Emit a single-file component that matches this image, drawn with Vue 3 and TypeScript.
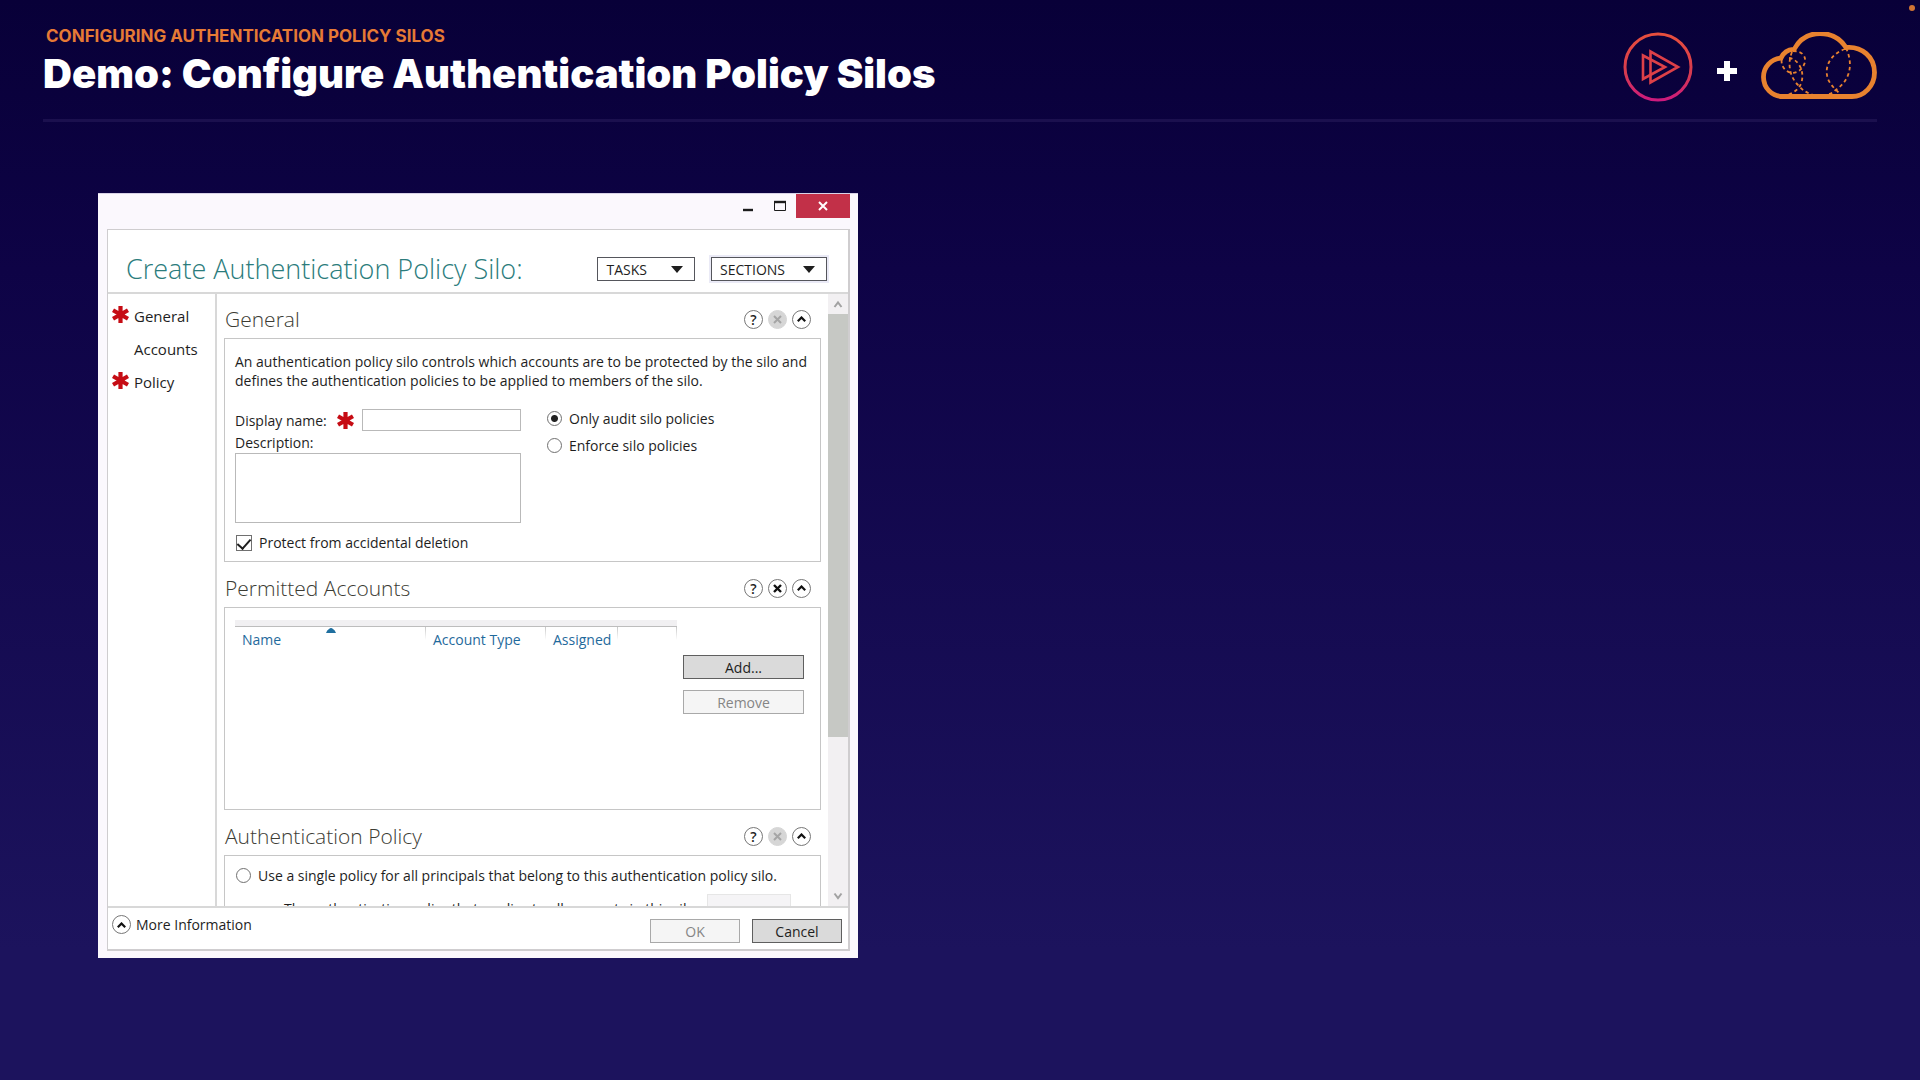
<script setup lang="ts">
import { ref } from 'vue'

interface NavItem {
  label: string
  required: boolean
}

const navItems: NavItem[] = [
  { label: 'General', required: true },
  { label: 'Accounts', required: false },
  { label: 'Policy', required: true },
]

const columns = ['Name', 'Account Type', 'Assigned', '']

const displayName = ref('')
const description = ref('')
const protect = ref(true)
const mode = ref('audit')
const policyScope = ref('')
</script>

<template>
  <div class="page">
    <header class="banner">
      <div class="heading">
        <p class="eyebrow">CONFIGURING AUTHENTICATION POLICY SILOS</p>
        <h1>Demo: Configure Authentication Policy Silos</h1>
      </div>
      <div class="logos">
        <svg width="70" height="70" viewBox="0 0 70 70" fill="none" aria-hidden="true">
          <defs>
            <linearGradient id="ring" x1="0" y1="0" x2="0" y2="70" gradientUnits="userSpaceOnUse">
              <stop offset="0" stop-color="#e8503c" />
              <stop offset="0.6" stop-color="#d63a50" />
              <stop offset="1" stop-color="#cc1880" />
            </linearGradient>
          </defs>
          <circle cx="35" cy="35" r="33" stroke="url(#ring)" stroke-width="3" />
          <path d="M20 23.500V47L42 35Z" stroke="#dd4048" stroke-width="2.600" />
          <path d="M27.500 19.500V50.500L55 35Z" stroke="#dd4048" stroke-width="2.600" />
        </svg>
        <svg class="plus" width="20" height="20" viewBox="0 0 20 20" aria-hidden="true">
          <path d="M7 0h6v7h7v6h-7v7h-6v-7H0V7h7z" fill="#fff" />
        </svg>
        <svg width="116" height="70" viewBox="0 1 116 70" fill="none" stroke="#e8822f" aria-hidden="true">
          <path
            d="M22 65.500H91C103 65.500 113.500 55 113.500 41.500C113.500 26 101 15 85 16.500C79 7 70 2.500 59 2.500C47 2.500 38 9 33 18.500C27 18 22 22 20 27C10 28 2.500 36 2.500 46C2.500 57 11 65.500 22 65.500Z"
            stroke-width="4.800"
          />
          <g stroke-width="1.800" stroke-dasharray="3.500 3">
            <path d="M32 20C41 20 45 25 44 31C42 38 37 42 31 42C24 41 19 34 21 27" />
            <path d="M28 27C37 28 43 39 41 49C40 56 34 62 26 64" />
            <path d="M31 21C26 33 29 46 37 54C41 59 46 62 52 64" />
            <path d="M84 18C72 22 64 33 66 44C67 52 74 58 80 64" />
            <path d="M85 17C92 32 90 48 76 58C73 60 71 63 65 64" />
          </g>
        </svg>
      </div>
      <span class="corner-dot"></span>
    </header>

    <main class="stage">
      <section class="dialog" aria-label="Create Authentication Policy Silo">
        <div class="titlebar">
          <button class="win-btn" type="button" aria-label="Minimize">
            <svg width="12" height="12" viewBox="0 0 12 12"><path d="M1 10h10" stroke="#1c1c1c" stroke-width="2.400" /></svg>
          </button>
          <button class="win-btn" type="button" aria-label="Maximize">
            <svg width="12" height="12" viewBox="0 0 12 12" fill="none">
              <path d="M.5 1v9.500h11V1" stroke="#1c1c1c" />
              <path d="M0 2h12" stroke="#1c1c1c" stroke-width="2.400" />
            </svg>
          </button>
          <button class="win-btn close" type="button" aria-label="Close">
            <svg width="10" height="10" viewBox="0 0 10 10"><path d="M1 1l8 8M9 1l-8 8" stroke="#fff" stroke-width="2" /></svg>
          </button>
        </div>

        <div class="frame">
          <div class="frame-head">
            <h2>Create Authentication Policy Silo:</h2>
            <div class="menus">
              <button class="menu" type="button">TASKS<span class="caret"></span></button>
              <button class="menu focused" type="button">SECTIONS<span class="caret"></span></button>
            </div>
          </div>

          <div class="frame-body">
            <nav class="side">
              <a v-for="item in navItems" :key="item.label" href="#" class="side-link">
                <span class="side-mark">
                  <svg v-if="item.required" width="17" height="17" viewBox="0 0 17 17" aria-label="Required">
                    <path d="M8.500 0v17M1 4.200l15 8.600M16 4.200l-15 8.600" stroke="#c60c14" stroke-width="4.200" />
                  </svg>
                </span>
                {{ item.label }}
              </a>
            </nav>

            <div class="content">
              <section class="group">
                <div class="group-head">
                  <h3>General</h3>
                  <div class="tools">
                    <button class="round" type="button" aria-label="Help">?</button>
                    <button class="round off" type="button" aria-label="Remove section" disabled>
                      <svg width="9" height="9" viewBox="0 0 9 9"><path d="M1 1l7 7M8 1l-7 7" stroke="#a5a5a5" stroke-width="2" /></svg>
                    </button>
                    <button class="round" type="button" aria-label="Collapse">
                      <svg width="9" height="6" viewBox="0 0 9 6" fill="none"><path d="M.8 5.200l3.700-3.700 3.700 3.700" stroke="#111" stroke-width="2.200" /></svg>
                    </button>
                  </div>
                </div>
                <div class="box general">
                  <p class="intro">
                    An authentication policy silo controls which accounts are to be protected by the silo and<br />
                    defines the authentication policies to be applied to members of the silo.
                  </p>
                  <div class="form">
                    <div class="fields">
                      <div class="name-row">
                        <label for="display-name">Display name:</label>
                        <svg width="17" height="17" viewBox="0 0 17 17" aria-label="Required">
                          <path d="M8.500 0v17M1 4.200l15 8.600M16 4.200l-15 8.600" stroke="#c60c14" stroke-width="4.200" />
                        </svg>
                        <input id="display-name" v-model="displayName" type="text" />
                      </div>
                      <label class="desc-label" for="description">Description:</label>
                      <textarea id="description" v-model="description"></textarea>
                    </div>
                    <div class="modes">
                      <label class="option"><input v-model="mode" type="radio" name="mode" value="audit" />Only audit silo policies</label>
                      <label class="option"><input v-model="mode" type="radio" name="mode" value="enforce" />Enforce silo policies</label>
                    </div>
                  </div>
                  <label class="option protect"><input v-model="protect" type="checkbox" />Protect from accidental deletion</label>
                </div>
              </section>

              <section class="group">
                <div class="group-head">
                  <h3>Permitted Accounts</h3>
                  <div class="tools">
                    <button class="round" type="button" aria-label="Help">?</button>
                    <button class="round" type="button" aria-label="Remove section">
                      <svg width="9" height="9" viewBox="0 0 9 9"><path d="M1 1l7 7M8 1l-7 7" stroke="#111" stroke-width="2.400" /></svg>
                    </button>
                    <button class="round" type="button" aria-label="Collapse">
                      <svg width="9" height="6" viewBox="0 0 9 6" fill="none"><path d="M.8 5.200l3.700-3.700 3.700 3.700" stroke="#111" stroke-width="2.200" /></svg>
                    </button>
                  </div>
                </div>
                <div class="box accounts">
                  <table>
                    <colgroup>
                      <col class="c-name" />
                      <col class="c-type" />
                      <col class="c-assigned" />
                      <col />
                    </colgroup>
                    <thead>
                      <tr>
                        <th v-for="(col, i) in columns" :key="i" scope="col">
                          {{ col }}
                          <svg v-if="i === 0" class="sort" width="10" height="5" viewBox="0 0 10 5"><path d="M0 5Q1 2 3 1Q5-1 7 1Q9 2 10 5Z" fill="#1f6f9f" /></svg>
                        </th>
                      </tr>
                    </thead>
                  </table>
                  <div class="actions">
                    <button class="push" type="button">Add...</button>
                    <button class="push" type="button" disabled>Remove</button>
                  </div>
                </div>
              </section>

              <section class="group">
                <div class="group-head">
                  <h3>Authentication Policy</h3>
                  <div class="tools">
                    <button class="round" type="button" aria-label="Help">?</button>
                    <button class="round off" type="button" aria-label="Remove section" disabled>
                      <svg width="9" height="9" viewBox="0 0 9 9"><path d="M1 1l7 7M8 1l-7 7" stroke="#a5a5a5" stroke-width="2" /></svg>
                    </button>
                    <button class="round" type="button" aria-label="Collapse">
                      <svg width="9" height="6" viewBox="0 0 9 6" fill="none"><path d="M.8 5.200l3.700-3.700 3.700 3.700" stroke="#111" stroke-width="2.200" /></svg>
                    </button>
                  </div>
                </div>
                <div class="box policy">
                  <label class="option"><input v-model="policyScope" type="radio" name="scope" value="single" />Use a single policy for all principals that belong to this authentication policy silo.</label>
                  <div class="policy-row">
                    <label for="policy">The authentication policy that applies to all accounts in this silo:</label>
                    <select id="policy" disabled></select>
                  </div>
                </div>
              </section>
            </div>

            <div class="scrollbar" aria-hidden="true">
              <svg width="20" height="20" viewBox="0 0 20 20" fill="none"><path d="M6.500 13L10 8.500 13.500 13" stroke="#a2a2a2" stroke-width="2" /></svg>
              <div class="track"><div class="thumb"></div></div>
              <svg width="20" height="20" viewBox="0 0 20 20" fill="none"><path d="M6.500 7.500L10 12 13.500 7.500" stroke="#a2a2a2" stroke-width="2" /></svg>
            </div>
          </div>

          <footer class="frame-foot">
            <button class="more" type="button">
              <span class="round">
                <svg width="9" height="6" viewBox="0 0 9 6" fill="none"><path d="M.8 5.200l3.700-3.700 3.700 3.700" stroke="#111" stroke-width="2.200" /></svg>
              </span>
              More Information
            </button>
            <div class="confirm">
              <button class="push" type="button" disabled>OK</button>
              <button class="push" type="button">Cancel</button>
            </div>
          </footer>
        </div>
      </section>
    </main>
  </div>
</template>

<style>
body {
  background: #1c135d;
}
</style>

<style scoped>
* {
  box-sizing: border-box;
}

h1,
h2,
h3,
p {
  margin: 0;
}

svg {
  flex: none;
  display: block;
}

button,
input,
textarea,
select {
  font: inherit;
  color: inherit;
  margin: 0;
  padding: 0;
  border-radius: 0;
}

.page {
  display: flex;
  flex-direction: column;
  height: 100vh;
  min-height: 900px;
  background: linear-gradient(#080038, #0e0346 25%, #1c135d 88%);
  font: 14px/19px "Open Sans", "Noto Sans", sans-serif;
  color: #1e1e1e;
}

.banner {
  position: relative;
  display: flex;
  justify-content: space-between;
  align-items: flex-start;
  height: 122px;
  margin: 0 43px;
  border-bottom: 3px solid #1b104e;
  font-family: Inter, sans-serif;
}

.heading {
  padding-top: 26px;
}

.eyebrow {
  padding-left: 3px;
  font-size: 17px;
  line-height: 20px;
  font-weight: 700;
  color: #e67a35;
}

h1 {
  font-size: 40px;
  line-height: 56px;
  font-weight: 900;
  color: #fff;
  white-space: nowrap;
}

.logos {
  display: flex;
  align-items: center;
  gap: 24px;
  padding-top: 32px;
}

.plus {
  margin-top: 8px;
}

.corner-dot {
  position: absolute;
  top: 5px;
  right: -38px;
  width: 6px;
  height: 6px;
  border-radius: 50%;
  background: #cf7434;
}

.stage {
  flex: 1;
  min-height: 0;
  display: grid;
  grid-template-columns: minmax(0, 760px) 1fr;
  padding: 71px 98px 122px;
}

.dialog {
  display: flex;
  flex-direction: column;
  min-height: 0;
  padding: 0 8px 7px 9px;
  background: #fbf8fd;
  border-top: 1px solid #d8d2e6;
}

.titlebar {
  display: flex;
  justify-content: flex-end;
  height: 35px;
}

.win-btn {
  display: flex;
  align-items: center;
  justify-content: center;
  width: 32px;
  height: 24px;
  border: 0;
  background: none;
}

.win-btn.close {
  width: 54px;
  background: #c23048;
}

.frame {
  flex: 1;
  min-height: 0;
  display: flex;
  flex-direction: column;
  border: 1px solid #cfcdcf;
  border-right-width: 2px;
  border-bottom-width: 2px;
  background: #fff;
}

.frame-head {
  display: flex;
  justify-content: space-between;
  align-items: center;
  height: 64px;
  padding: 16px 21px 0 18px;
  border-bottom: 2px solid #d8d8d8;
}

h2 {
  font-size: 27px;
  line-height: 36px;
  font-weight: 300;
  color: #2b7c7c;
  white-space: nowrap;
}

.menus {
  display: flex;
  gap: 16px;
}

.menu {
  display: flex;
  align-items: center;
  gap: 24px;
  height: 24px;
  padding: 0 11px 0 8px;
  border: 1px solid #55565c;
  background: #fff;
}

.menu.focused {
  gap: 18px;
  box-shadow: 0 0 0 2px #eaeaf6;
}

.caret {
  border: 6px solid transparent;
  border-top: 7px solid #1e1e1e;
  border-bottom: 0;
}

.frame-body {
  flex: 1;
  min-height: 0;
  display: flex;
}

.side {
  width: 109px;
  flex: none;
  display: flex;
  flex-direction: column;
  gap: 13px;
  padding: 12px 0 0 4px;
  border-right: 2px solid #d8d8d8;
}

.side-link {
  display: flex;
  gap: 5px;
  height: 20px;
  line-height: 20px;
  font-size: 15px;
  color: inherit;
  text-decoration: none;
}

.side-mark {
  width: 17px;
}

.content {
  flex: 1;
  min-width: 0;
  padding: 0 7px;
  overflow: hidden;
}

.group + .group {
  margin-top: 1px;
}

.group-head {
  display: flex;
  justify-content: space-between;
  align-items: center;
  height: 44px;
  padding: 6px 10px 0 1px;
}

h3 {
  font-size: 21px;
  line-height: 28px;
  font-weight: 300;
  color: #3c3c34;
}

.tools {
  display: flex;
  gap: 5px;
}

.round {
  display: flex;
  align-items: center;
  justify-content: center;
  flex: none;
  width: 19px;
  height: 19px;
  border: 1px solid #777;
  border-radius: 50%;
  background: #fff;
  font-weight: 600;
  line-height: 17px;
}

.round.off {
  border-color: #d6d6d6;
  background: #d6d6d6;
}

.box {
  border: 1px solid #c6c6c6;
  background: #fff;
}

.general {
  height: 224px;
  padding: 13px 10px 0;
}

.intro {
  white-space: nowrap;
}

.form {
  display: flex;
  gap: 26px;
  margin-top: 19px;
}

.fields {
  display: flex;
  flex-direction: column;
  width: 286px;
}

.name-row {
  display: flex;
  align-items: center;
  height: 22px;
}

.name-row label {
  width: 102px;
}

.name-row input {
  flex: 1;
  min-width: 0;
  height: 22px;
  margin-left: 8px;
  border: 1px solid #b9b9b9;
}

.desc-label {
  height: 22px;
  line-height: 24px;
}

textarea {
  height: 70px;
  border: 1px solid #b9b9b9;
  resize: none;
}

.modes {
  display: flex;
  flex-direction: column;
  gap: 8px;
}

.option {
  display: flex;
  align-items: center;
  gap: 7px;
  white-space: nowrap;
}

.option input {
  appearance: none;
  flex: none;
  width: 15px;
  height: 15px;
  border: 1px solid #707070;
  background: #fff;
}

.option input[type="radio"] {
  border-radius: 50%;
}

.option input[type="radio"]:checked {
  background: radial-gradient(circle, #222 0 3px, #fff 4px);
}

.option input[type="checkbox"] {
  display: grid;
  place-items: center;
  width: 16px;
  height: 16px;
}

.option input[type="checkbox"]:checked::before {
  content: "";
  width: 6px;
  height: 11px;
  margin-bottom: 4px;
  border: solid #1e1e1e;
  border-width: 0 2px 2px 0;
  transform: rotate(42deg);
}

.protect {
  margin-top: 10px;
  padding-left: 1px;
}

.accounts {
  display: flex;
  align-items: flex-start;
  justify-content: space-between;
  height: 203px;
  padding: 12px 16px 0 10px;
}

table {
  width: 442px;
  table-layout: fixed;
  border-collapse: collapse;
  border-top: 6px solid #f1f0f2;
}

.c-name {
  width: 191px;
}

.c-type {
  width: 120px;
}

.c-assigned {
  width: 72px;
}

th {
  position: relative;
  height: 26px;
  padding: 4px 0 0 7px;
  text-align: left;
  font-weight: 400;
  color: #1f6a9c;
  background:
    linear-gradient(#bdbdbd, #bdbdbd) top / 100% 1px no-repeat,
    linear-gradient(#c4c4c4, #fff) right top / 1px 14px no-repeat;
}

.sort {
  position: absolute;
  top: 2px;
  left: 91px;
}

.actions {
  display: flex;
  flex-direction: column;
  gap: 11px;
  width: 121px;
  padding-top: 35px;
}

.push {
  height: 24px;
  border: 1px solid #5f5f5f;
  background: #dadada;
}

.push:disabled {
  border-color: #a9a9a9;
  background: #f5f5f5;
  color: #858585;
}

.policy {
  height: 120px;
  padding: 10px 11px 0;
}

.policy-row {
  display: flex;
  justify-content: space-between;
  padding: 9px 18px 0 48px;
  white-space: nowrap;
}

.policy-row label {
  padding-top: 5px;
}

.policy-row select {
  width: 84px;
  height: 24px;
  appearance: none;
  border: 1px solid #dcdcdc;
  background: #f2f0f3;
}

.scrollbar {
  display: flex;
  flex-direction: column;
  width: 20px;
  background: #f2f0f2;
}

.track {
  flex: 1;
}

.thumb {
  height: 74%;
  background: #c6c8c4;
}

.frame-foot {
  display: flex;
  justify-content: space-between;
  align-items: flex-start;
  height: 43px;
  padding: 7px 6px 0 4px;
  border-top: 2px solid #d8d8d8;
}

.more {
  display: flex;
  align-items: center;
  gap: 5px;
  border: 0;
  background: none;
}

.confirm {
  display: flex;
  gap: 12px;
  padding-top: 4px;
}

.confirm .push {
  width: 90px;
}
</style>
